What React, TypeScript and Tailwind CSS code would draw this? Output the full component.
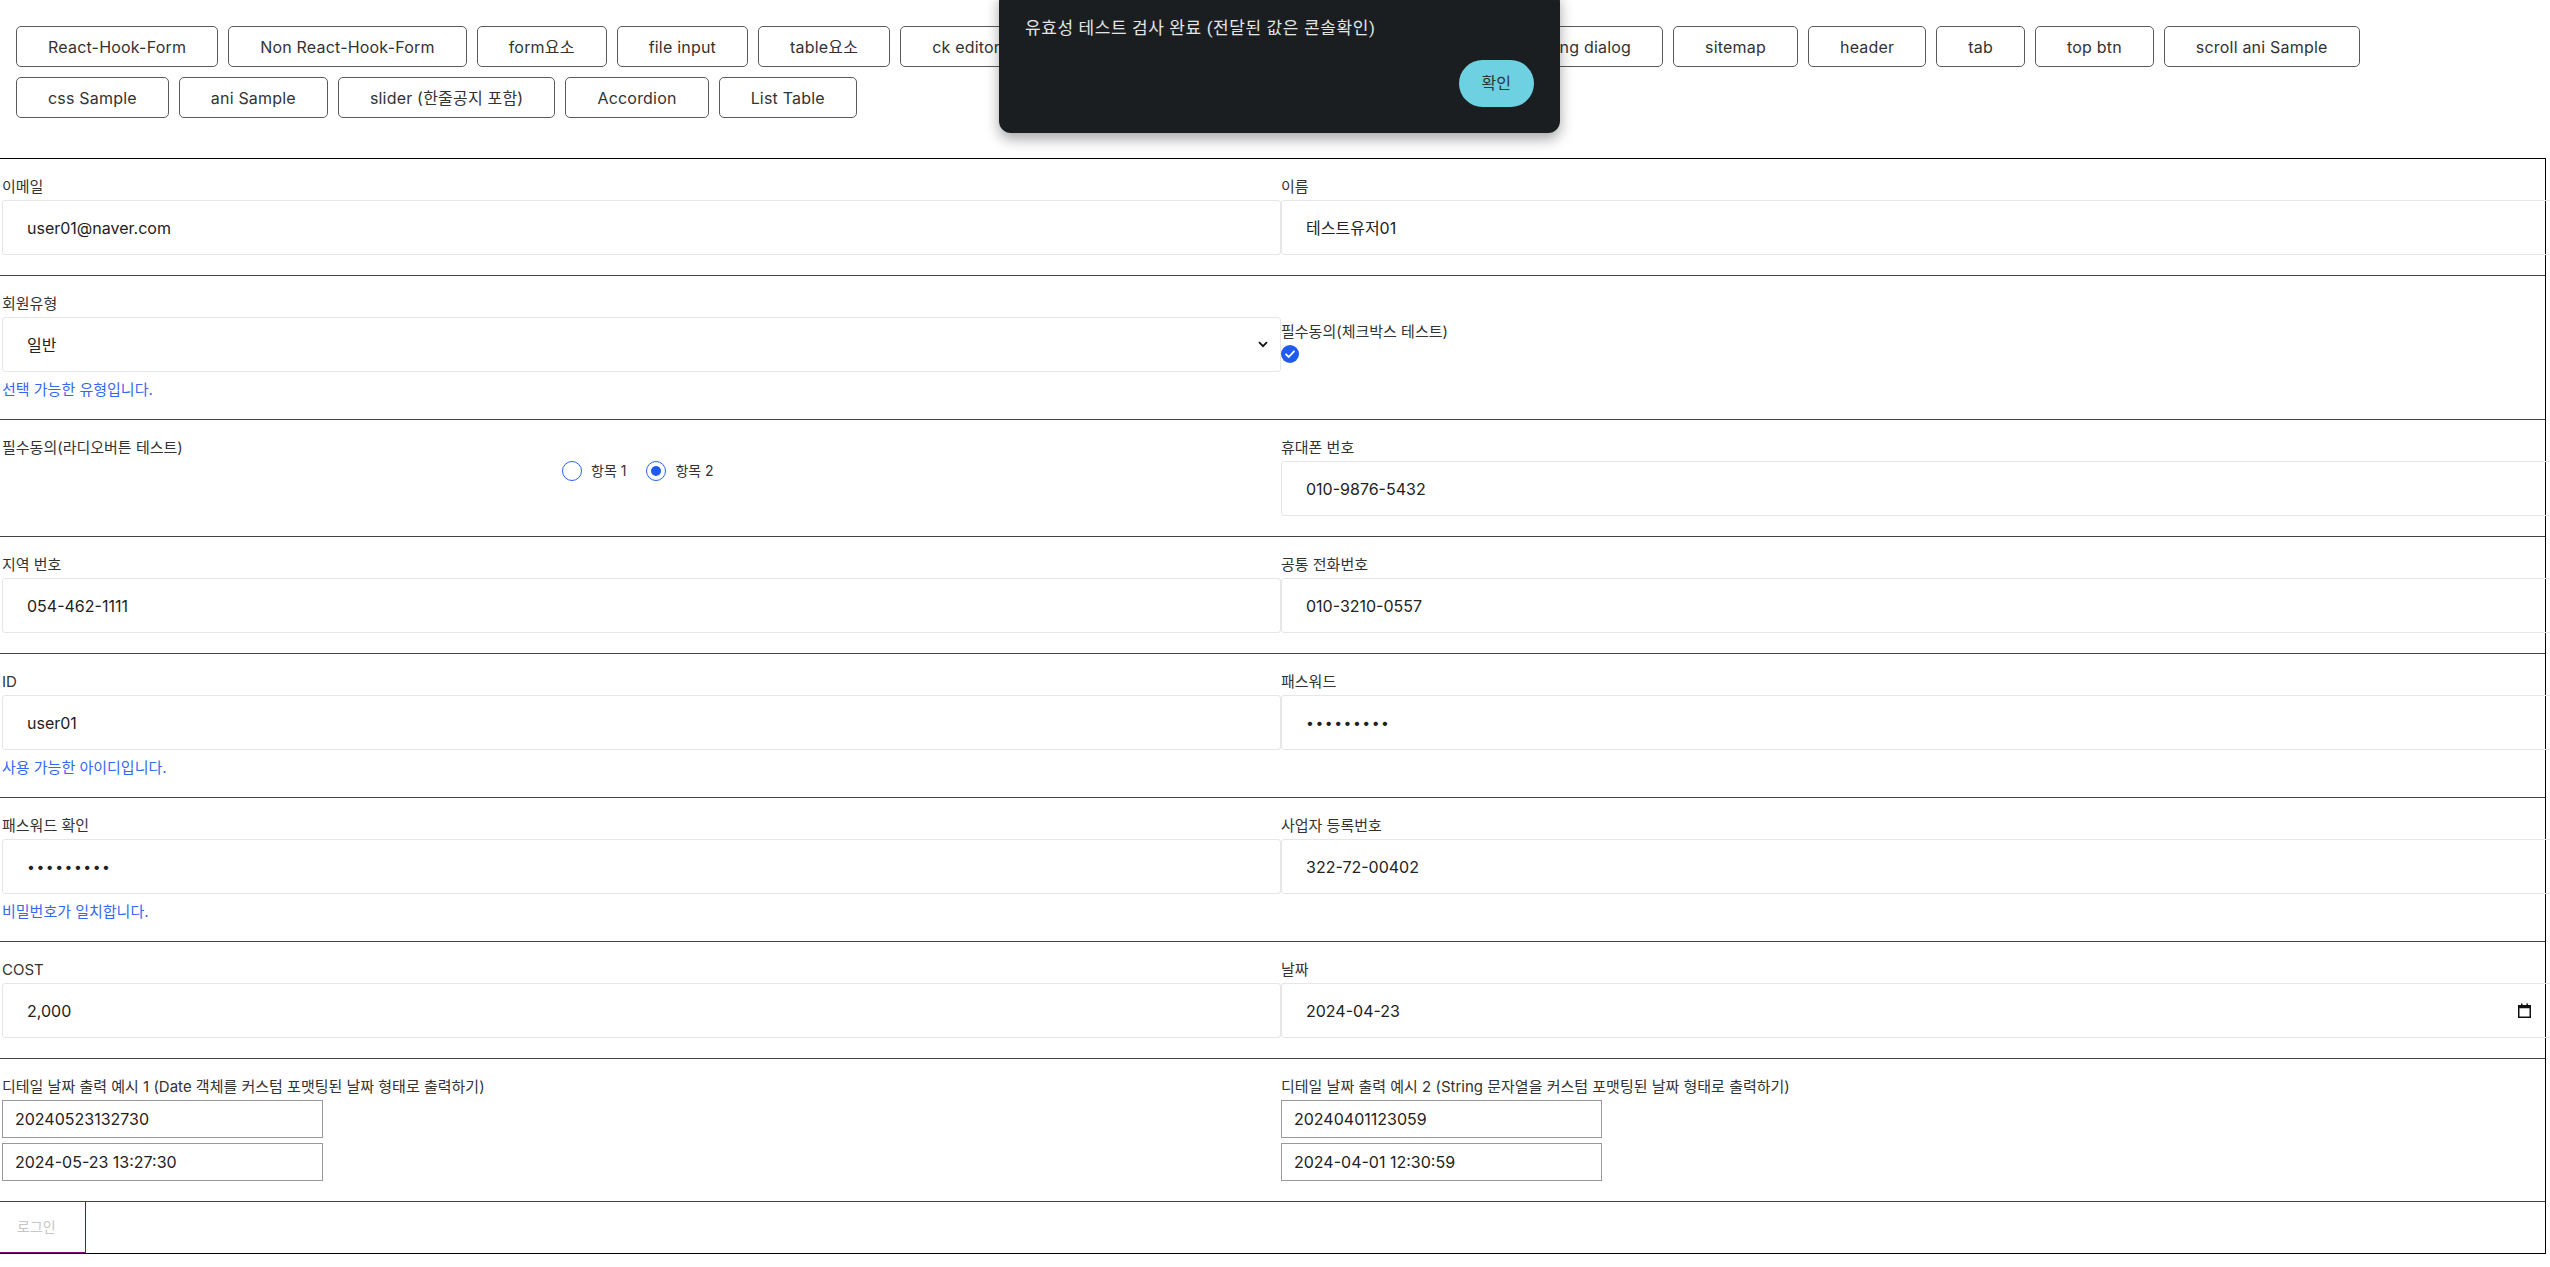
import React from "react";

const navTop = [
  "React-Hook-Form",
  "Non React-Hook-Form",
  "form요소",
  "file input",
  "table요소",
  "ck editor",
  "daum postcode",
  "tip",
  "alert dialog",
  "loading dialog",
  "sitemap",
  "header",
  "tab",
  "top btn",
  "scroll ani Sample",
];

const navBottom = ["css Sample", "ani Sample", "slider (한줄공지 포함)", "Accordion", "List Table"];

const NavButton = ({ label }: { label: string }) => (
  <button className="h-[41px] px-[31px] border border-[#5a5a5a] rounded-[5px] bg-white text-base leading-6 tracking-[0.2px] text-[#333] whitespace-nowrap">
    {label}
  </button>
);

const Label = ({ children }: { children: React.ReactNode }) => (
  <div className="text-[15px] leading-5 text-[#333]">{children}</div>
);

const Helper = ({ children }: { children: React.ReactNode }) => (
  <div className="mt-[9px] text-[15px] leading-[18px] text-[#3568f2]">{children}</div>
);

const Box = ({ children }: { children: React.ReactNode }) => (
  <div className="mt-[3px] h-[55px] w-full border border-[#e6e6e6] rounded-[3px] pl-[24px] pr-[30px] flex items-center text-base text-[#222]">
    {children}
  </div>
);

const Field = ({ label, value, helper }: { label: string; value: React.ReactNode; helper?: string }) => (
  <div className="pt-[18px] pb-[20px]">
    <Label>{label}</Label>
    <Box>{value}</Box>
    {helper && <Helper>{helper}</Helper>}
  </div>
);

const Dots = () => <span className="tracking-[1.5px] text-[14px] leading-none">•••••••••</span>;

const Row = ({ left, right }: { left: React.ReactNode; right: React.ReactNode }) => (
  <div className="grid grid-cols-[1281px_1281px] border-b border-[#444]">
    <div className="pl-[2px]">{left}</div>
    <div>{right}</div>
  </div>
);

const Radio = ({ checked, label }: { checked?: boolean; label: string }) => (
  <div className="flex items-center gap-[9px]">
    <span className="w-5 h-5 rounded-full border border-[#2a62f0] flex items-center justify-center bg-white">
      {checked && <span className="w-[10px] h-[10px] rounded-full bg-[#1f5bf0]" />}
    </span>
    <span className="text-sm text-[#333]">{label}</span>
  </div>
);

const DateBox = ({ children }: { children: React.ReactNode }) => (
  <div className="w-[321px] h-[38px] border border-[#999] pl-3 flex items-center text-base text-[#222]">{children}</div>
);

export default function App() {
  return (
    <div className="relative w-full min-h-screen bg-white overflow-hidden font-[Inter,'Noto_Sans_CJK_KR',sans-serif]">
      <div className="pl-4 pt-[26px] pb-[40px] flex flex-col gap-[10px]">
        <div className="flex gap-[10px]">
          {navTop.map((n) => (
            <NavButton key={n} label={n} />
          ))}
        </div>
        <div className="flex gap-[10px]">
          {navBottom.map((n) => (
            <NavButton key={n} label={n} />
          ))}
        </div>
      </div>

      <div className="w-[2546px] border-t border-r border-b border-black">
        <Row
          left={<Field label="이메일" value="user01@naver.com" />}
          right={<Field label="이름" value="테스트유저01" />}
        />
        <Row
          left={
            <Field
              label="회원유형"
              value={
                <div className="flex items-center w-full">
                  <span>일반</span>
                  <svg className="ml-auto -mr-[18px]" width="10" height="7" viewBox="0 0 10 7">
                    <path d="M1 1.2 L5 5.2 L9 1.2" fill="none" stroke="#111" strokeWidth="1.8" />
                  </svg>
                </div>
              }
              helper="선택 가능한 유형입니다."
            />
          }
          right={
            <div className="pt-[46px]">
              <Label>필수동의(체크박스 테스트)</Label>
              <svg className="mt-[3px]" width="18" height="18" viewBox="0 0 18 18">
                <circle cx="9" cy="9" r="9" fill="#1f5bf0" />
                <path d="M5 9.3 L7.8 12 L13 6.3" fill="none" stroke="#fff" strokeWidth="1.8" strokeLinecap="round" strokeLinejoin="round" />
              </svg>
            </div>
          }
        />
        <Row
          left={
            <div className="pt-[18px]">
              <Label>필수동의(라디오버튼 테스트)</Label>
              <div className="mt-[3px] ml-[560px] flex items-center gap-[20px]">
                <Radio label="항목 1" />
                <Radio checked label="항목 2" />
              </div>
            </div>
          }
          right={<Field label="휴대폰 번호" value="010-9876-5432" />}
        />
        <Row
          left={<Field label="지역 번호" value="054-462-1111" />}
          right={<Field label="공통 전화번호" value="010-3210-0557" />}
        />
        <Row
          left={<Field label="ID" value="user01" helper="사용 가능한 아이디입니다." />}
          right={<Field label="패스워드" value={<Dots />} />}
        />
        <Row
          left={<Field label="패스워드 확인" value={<Dots />} helper="비밀번호가 일치합니다." />}
          right={<Field label="사업자 등록번호" value="322-72-00402" />}
        />
        <Row
          left={<Field label="COST" value="2,000" />}
          right={
            <Field
              label="날짜"
              value={
                <div className="flex items-center w-full">
                  <span>2024-04-23</span>
                  <svg className="ml-auto" width="13" height="15" viewBox="0 0 13 15">
                    <rect x="0.75" y="2.75" width="11.5" height="11.5" fill="none" stroke="#111" strokeWidth="1.5" />
                    <rect x="0.75" y="2.75" width="11.5" height="2.5" fill="#111" />
                    <rect x="3" y="0.5" width="1.5" height="3" fill="#111" />
                    <rect x="8.5" y="0.5" width="1.5" height="3" fill="#111" />
                  </svg>
                </div>
              }
            />
          }
        />
        <Row
          left={
            <div className="pt-[18px] pb-[20px]">
              <Label>디테일 날짜 출력 예시 1 (Date 객체를 커스텀 포맷팅된 날짜 형태로 출력하기)</Label>
              <div className="mt-[3px] flex flex-col gap-[5px]">
                <DateBox>20240523132730</DateBox>
                <DateBox>2024-05-23 13:27:30</DateBox>
              </div>
            </div>
          }
          right={
            <div className="pt-[18px] pb-[20px]">
              <Label>디테일 날짜 출력 예시 2 (String 문자열을 커스텀 포맷팅된 날짜 형태로 출력하기)</Label>
              <div className="mt-[3px] flex flex-col gap-[5px]">
                <DateBox>20240401123059</DateBox>
                <DateBox>2024-04-01 12:30:59</DateBox>
              </div>
            </div>
          }
        />
        <div className="flex">
          <button className="w-[86px] h-[51px] pl-[17px] text-left border-r border-b border-[#800080] text-sm text-[#c6c6c6] bg-white">
            로그인
          </button>
        </div>
      </div>

      <div className="absolute left-[999px] top-[-10px] w-[561px] rounded-xl bg-[#1b1e20] p-[26px] shadow-[0_6px_14px_rgba(0,0,0,0.35)] font-[Roboto,'Noto_Sans_CJK_KR',sans-serif]">
        <p className="text-[17px] leading-6 tracking-[0.6px] text-[#e4e4e4]">유효성 테스트 검사 완료 (전달된 값은 콘솔확인)</p>
        <div className="mt-5 flex justify-end">
          <button className="h-[47px] px-[23px] rounded-full bg-[#6dd1e1] text-base text-[#2a3639]">확인</button>
        </div>
      </div>
    </div>
  );
}
